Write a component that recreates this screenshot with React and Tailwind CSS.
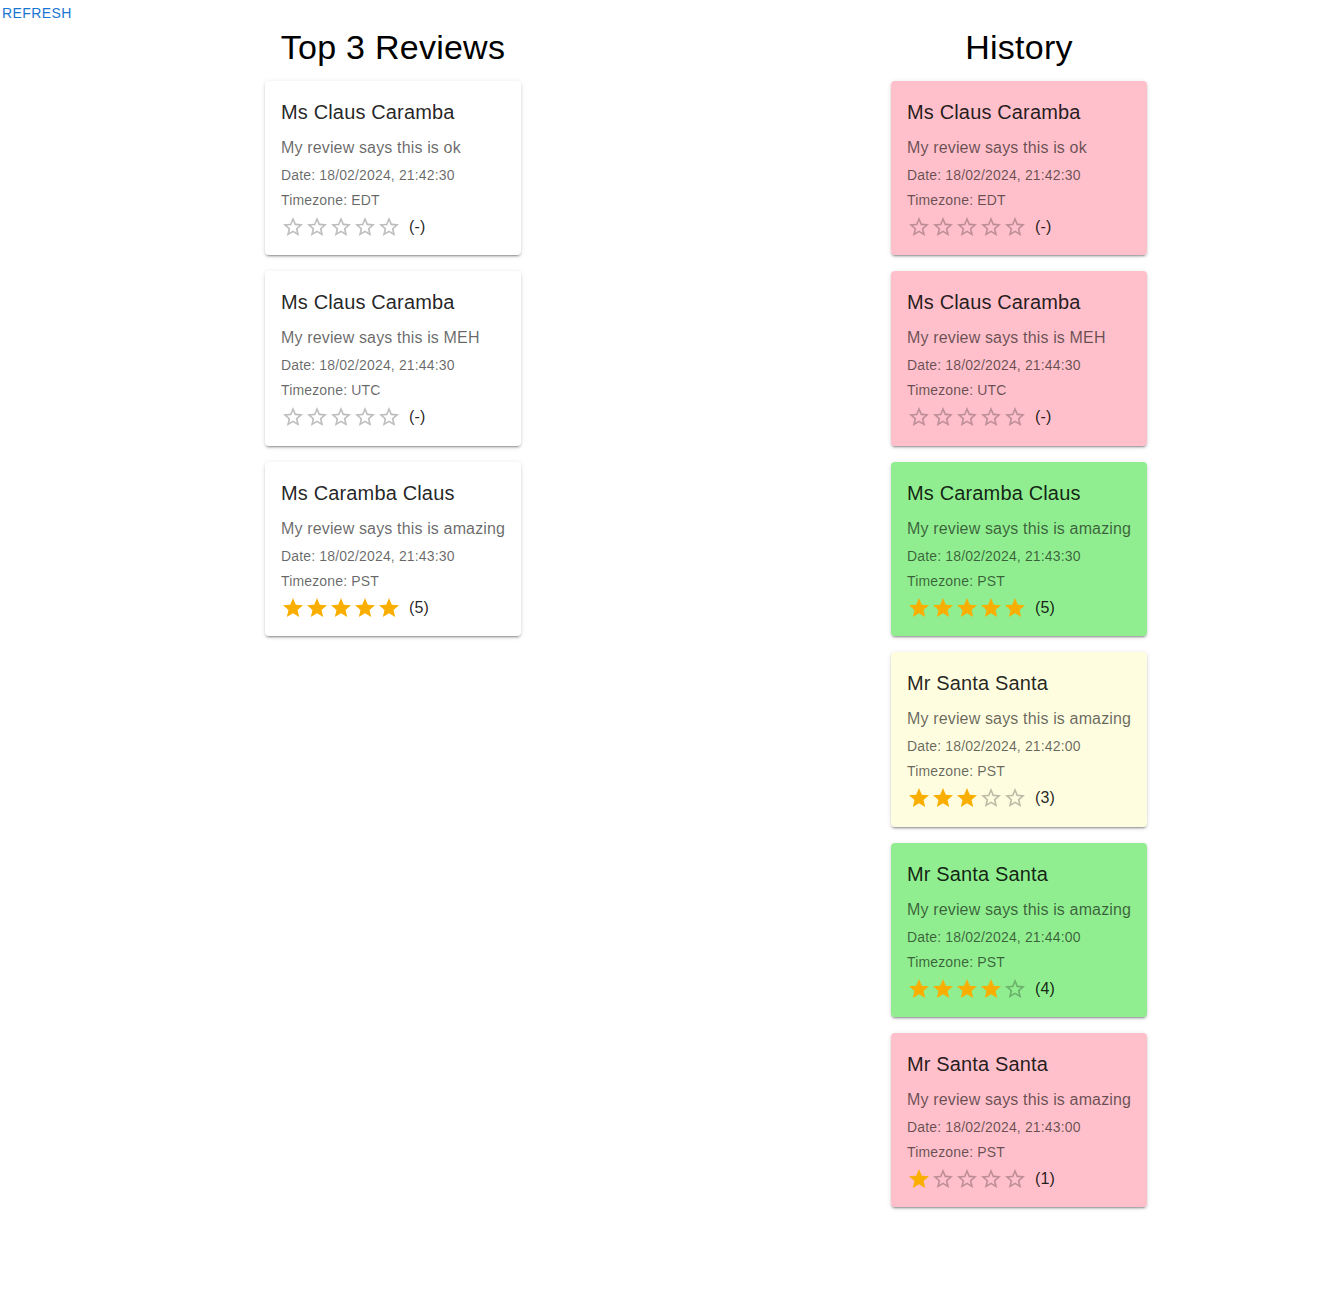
const top = [
  { name: 'Ms Claus Caramba', text: 'My review says this is ok', date: '18/02/2024, 21:42:30', tz: 'EDT', rating: null },
  { name: 'Ms Claus Caramba', text: 'My review says this is MEH', date: '18/02/2024, 21:44:30', tz: 'UTC', rating: null },
  { name: 'Ms Caramba Claus', text: 'My review says this is amazing', date: '18/02/2024, 21:43:30', tz: 'PST', rating: 5 },
]

const history = [
  { name: 'Ms Claus Caramba', text: 'My review says this is ok', date: '18/02/2024, 21:42:30', tz: 'EDT', rating: null, bg: 'bg-[#ffc0cb]' },
  { name: 'Ms Claus Caramba', text: 'My review says this is MEH', date: '18/02/2024, 21:44:30', tz: 'UTC', rating: null, bg: 'bg-[#ffc0cb]' },
  { name: 'Ms Caramba Claus', text: 'My review says this is amazing', date: '18/02/2024, 21:43:30', tz: 'PST', rating: 5, bg: 'bg-[#90ee90]' },
  { name: 'Mr Santa Santa', text: 'My review says this is amazing', date: '18/02/2024, 21:42:00', tz: 'PST', rating: 3, bg: 'bg-[#fffde0]' },
  { name: 'Mr Santa Santa', text: 'My review says this is amazing', date: '18/02/2024, 21:44:00', tz: 'PST', rating: 4, bg: 'bg-[#90ee90]' },
  { name: 'Mr Santa Santa', text: 'My review says this is amazing', date: '18/02/2024, 21:43:00', tz: 'PST', rating: 1, bg: 'bg-[#ffc0cb]' },
]

function Star({ filled }) {
  return (
    <svg viewBox="0 0 24 24" className={filled ? 'w-6 h-6 fill-[#faaf00]' : 'w-6 h-6 fill-[rgba(0,0,0,0.26)]'}>
      {filled ? (
        <path d="M12 17.27L18.18 21l-1.64-7.03L22 9.24l-7.19-.61L12 2 9.19 8.63 2 9.24l5.46 4.73L5.82 21z" />
      ) : (
        <path d="M22 9.24l-7.19-.62L12 2 9.19 8.63 2 9.24l5.46 4.73L5.82 21 12 17.27 18.18 21l-1.63-7.03L22 9.24zM12 15.4l-3.76 2.27 1-4.28-3.32-2.88 4.38-.38L12 6.1l1.71 4.04 4.38.38-3.32 2.88 1 4.28L12 15.4z" />
      )}
    </svg>
  )
}

function ReviewCard({ review, bg = 'bg-white' }) {
  return (
    <div className={`${bg} w-[256px] rounded px-4 pt-4 pb-[16.4px] flex flex-col shadow-[0px_3px_1px_-2px_rgba(0,0,0,0.2),0px_2px_2px_0px_rgba(0,0,0,0.14),0px_1px_5px_0px_rgba(0,0,0,0.12)]`}>
      <div className="h-8 leading-[30px] text-[20px] tracking-[0.15px] text-[rgba(0,0,0,0.87)]">{review.name}</div>
      <div className="mt-[7px] h-6 leading-6 text-[16px] tracking-[0.15px] text-[rgba(0,0,0,0.6)] whitespace-nowrap">{review.text}</div>
      <div className="mt-[5px] h-5 leading-5 text-[14px] tracking-[0.15px] text-[rgba(0,0,0,0.6)]">Date: {review.date}</div>
      <div className="mt-[5px] h-5 leading-5 text-[14px] tracking-[0.15px] text-[rgba(0,0,0,0.6)]">Timezone: {review.tz}</div>
      <div className="mt-[5px] h-6 flex items-center">
        {[1, 2, 3, 4, 5].map((i) => (
          <Star key={i} filled={review.rating != null && i <= review.rating} />
        ))}
        <span className="ml-2 text-[16px] tracking-[0.15px] text-[rgba(0,0,0,0.87)]">({review.rating ?? '-'})</span>
      </div>
    </div>
  )
}

function Column({ title, children }) {
  return (
    <div className="w-[256px] flex flex-col items-center">
      <h1 className="h-[42px] leading-[42px] text-[34px] tracking-[0.25px] text-black mb-[13px] whitespace-nowrap">{title}</h1>
      <div className="flex flex-col gap-4">{children}</div>
    </div>
  )
}

export default function App() {
  return (
    <div className="min-h-[1307px] bg-white font-['Liberation_Sans',Arial,sans-serif]">
      <div className="h-[26px] flex items-center pl-[2px]">
        <button className="text-[14px] tracking-[0.4px] text-[#1976d2] uppercase">Refresh</button>
      </div>
      <div className="flex pl-[265px] gap-[370px]">
        <Column title="Top 3 Reviews">
          {top.map((r, i) => (
            <ReviewCard key={i} review={r} />
          ))}
        </Column>
        <Column title="History">
          {history.map((r, i) => (
            <ReviewCard key={i} review={r} bg={r.bg} />
          ))}
        </Column>
      </div>
    </div>
  )
}
